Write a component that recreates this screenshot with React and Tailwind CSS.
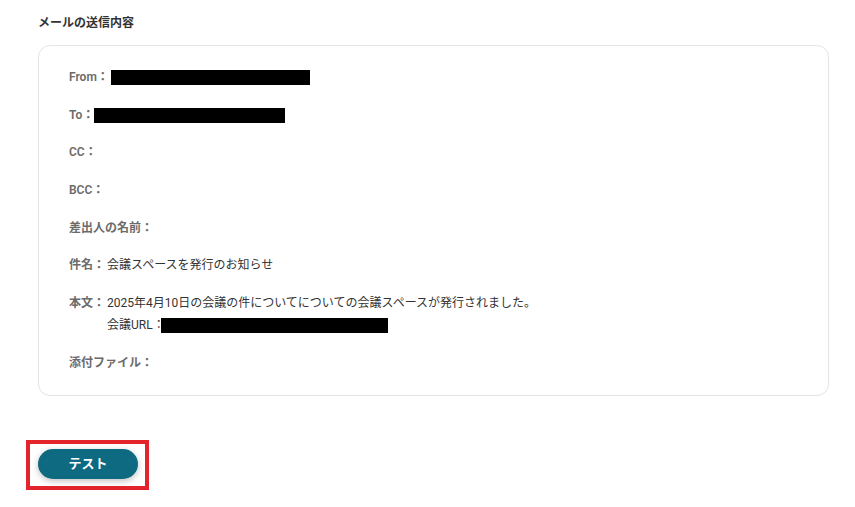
import React from "react";

const font = { fontFamily: 'Roboto, "Noto Sans CJK JP", sans-serif' };

const Row = ({ label, children }) => (
  <div className="flex items-start text-[12px] leading-[22px]">
    <span className="font-semibold text-[#6b6b6b] whitespace-nowrap">{label}</span>
    <div className="ml-[2px] text-[#333]">{children}</div>
  </div>
);

const Redacted = ({ w }) => <span className={`inline-block h-[15px] bg-black align-middle ${w}`}></span>;

export default function App() {
  return (
    <div className="min-h-[507px] w-[855px] bg-white pl-[38px] pt-[13px]" style={font}>
      <h2 className="text-[12px] leading-[20px] font-bold text-[#333]">メールの送信内容</h2>

      {/* Mail card */}
      <div className="mt-[12px] w-[791px] rounded-[12px] border border-[#e4e4e4] pl-[30px] pt-[20px] pb-[21px]">
        <div className="flex flex-col gap-[15.7px]">
          <Row label="From：">
            <Redacted w="w-[199px]" />
          </Row>
          <Row label="To：">
            <Redacted w="w-[191px] -ml-[2px]" />
          </Row>
          <Row label="CC：" />
          <Row label="BCC：" />
          <Row label="差出人の名前：" />
          <Row label="件名：">会議スペースを発行のお知らせ</Row>
          <Row label="本文：">
            <p>2025年4月10日の会議の件についてについての会議スペースが発行されました。</p>
            <p className="flex items-center">
              会議URL：
              <Redacted w="w-[227px] -ml-[4px]" />
            </p>
          </Row>
          <Row label="添付ファイル：" />
        </div>
      </div>

      {/* Test button with highlight */}
      <div className="mt-[44px] -ml-[12px] inline-block border-4 border-[#e3242b] pl-[8px] pr-[7px] pt-[5px] pb-[7px]">
        <button className="h-[30px] w-[100px] rounded-full bg-[#0e6a80] text-[13px] font-bold text-white shadow-[0_2px_6px_rgba(0,0,0,0.25)]">
          テスト
        </button>
      </div>
    </div>
  );
}
